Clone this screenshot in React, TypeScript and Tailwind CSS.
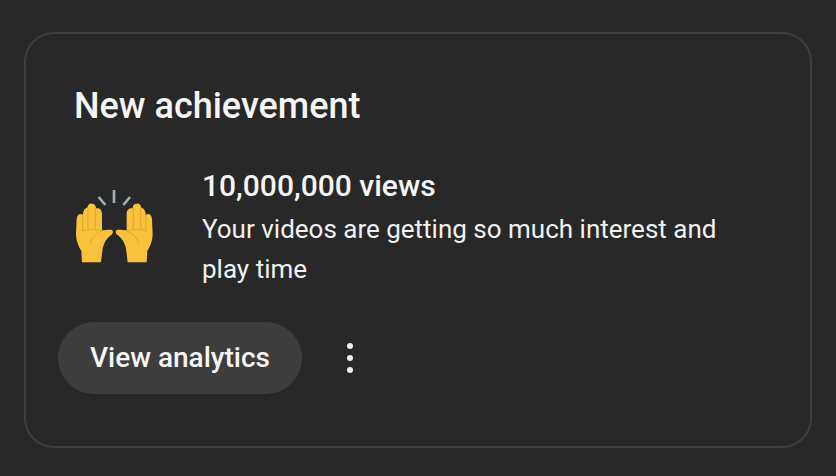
const RaisedHand = ({ flip }: { flip?: boolean }) => (
  <g transform={flip ? "matrix(-1 0 0 1 326 0)" : undefined}>
    {/* palm and fingers */}
    <path
      d="M66 280 L64 246 C54 230 48 214 48 196 L50 150 C51 135 62 132 68 138 C70 122 76 116 82 116 C84 106 90 103 96 104 C104 104 108 110 108 118 C118 116 126 122 126 134 L126 184 C136 184 148 181 156 183 C162 188 158 196 150 200 C138 210 132 222 128 238 L123 280 Z"
      fill="#f9c23c"
    />
    {/* finger creases */}
    <path
      d="M68 140 L68 186 M84 118 L84 180 M106 118 L106 180 M68 186 C86 180 106 180 126 186 C108 192 96 204 90 222"
      fill="none"
      stroke="#dca22c"
      strokeWidth="2.5"
      strokeLinecap="round"
    />
    {/* burst line */}
    <path d="M116 84 L136 108" stroke="#9fb0b8" strokeWidth="8" fill="none" />
  </g>
);

export default function App() {
  return (
    <div
      className="h-[476px] w-[836px] overflow-hidden bg-[#282828] pl-[24px] pt-[32px] text-white"
      style={{ fontFamily: "Roboto, sans-serif" }}
    >
      <div className="h-[416px] w-[788px] rounded-[30px] border-2 border-[#3e3e3e] pl-[32px] pt-[52px]">
        {/* Header */}
        <h3 className="ml-[16px] text-[36px] leading-[40px] font-medium text-[#f5f5f5]">
          New achievement
        </h3>

        {/* Achievement row */}
        <div className="mt-[40px] ml-[17px] flex">
          <svg
            viewBox="45 60 240 225"
            className="mt-[23px] h-[75px] w-[80px] shrink-0"
          >
            <RaisedHand />
            <RaisedHand flip />
            <path d="M162 63 L162 102" stroke="#9fb0b8" strokeWidth="8" fill="none" />
          </svg>
          <div className="ml-[47px]">
            <p className="text-[30px] leading-[40px] font-medium text-[#f5f5f5]">
              10,000,000 views
            </p>
            <p className="mt-[3px] w-[530px] text-[26px] leading-[40px] text-[#f1f1f1]">
              Your videos are getting so much interest and play time
            </p>
          </div>
        </div>

        {/* Actions */}
        <div className="mt-[33px] flex items-center">
          <button className="h-[72px] w-[244px] rounded-full bg-[#3d3d3d] text-[28px] font-medium text-[#f5f5f5]">
            View analytics
          </button>
          <div className="ml-[45px] flex flex-col gap-[6px]">
            <span className="h-[6px] w-[6px] rounded-full bg-[#f1f1f1]" />
            <span className="h-[6px] w-[6px] rounded-full bg-[#f1f1f1]" />
            <span className="h-[6px] w-[6px] rounded-full bg-[#f1f1f1]" />
          </div>
        </div>
      </div>
    </div>
  );
}
